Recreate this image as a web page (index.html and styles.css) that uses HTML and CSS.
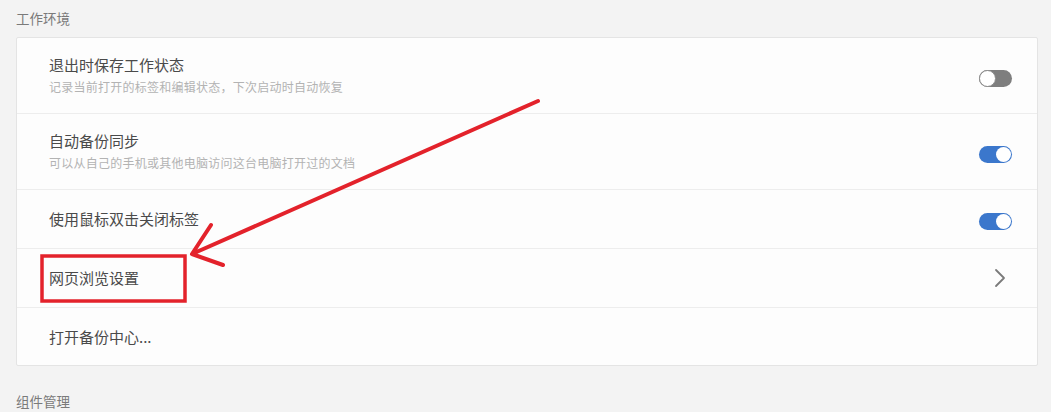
FILE: index.html
```html
<!DOCTYPE html>
<html lang="zh">
<head>
<meta charset="utf-8">
<link rel="stylesheet" href="styles.css">
</head>
<body>
<div class="page">
  <div class="section-title">工作环境</div>
  <div class="card">
    <div class="row tall">
      <div class="text">
        <div class="title">退出时保存工作状态</div>
        <div class="desc">记录当前打开的标签和编辑状态，下次启动时自动恢复</div>
      </div>
      <div class="toggle off"><span class="knob"></span></div>
    </div>
    <div class="row tall">
      <div class="text">
        <div class="title">自动备份同步</div>
        <div class="desc">可以从自己的手机或其他电脑访问这台电脑打开过的文档</div>
      </div>
      <div class="toggle on"><span class="knob"></span></div>
    </div>
    <div class="row">
      <div class="text"><div class="title">使用鼠标双击关闭标签</div></div>
      <div class="toggle on"><span class="knob"></span></div>
    </div>
    <div class="row">
      <div class="text"><div class="title">网页浏览设置</div></div>
      <svg class="chevron" width="12" height="20" viewBox="0 0 12 20"><path d="M2 2 L10 10 L2 18" fill="none" stroke="#7a7a7a" stroke-width="1.8" stroke-linecap="round" stroke-linejoin="round"/></svg>
    </div>
    <div class="row last">
      <div class="text"><div class="title">打开备份中心...</div></div>
    </div>
  </div>
  <div class="section-title second">组件管理</div>
</div>
<svg class="annot" width="1051" height="412" viewBox="0 0 1051 412">
  <rect x="42" y="256" width="143" height="45" fill="none" stroke="#e3222b" stroke-width="3.5"/>
  <path d="M538 101 L192 254 M211 225 L192 254 L223 265" fill="none" stroke="#e3222b" stroke-width="4" stroke-linecap="round" stroke-linejoin="round"/>
</svg>
</body>
</html>
```

FILE: styles.css
```css
html, body {
  margin: 0;
  padding: 0;
  background: #f3f3f3;
  font-family: "Noto Sans CJK SC", "Noto Sans", sans-serif;
}
.page {
  padding: 0 13px 0 16px;
  width: 1051px;
  height: 412px;
  box-sizing: border-box;
  overflow: hidden;
}
.section-title {
  height: 37px;
  line-height: 37px;
  font-size: 13.5px;
  color: #7a7a7a;
}
.section-title.second {
  margin-top: 18px;
  height: 34px;
  line-height: 34px;
}
.card {
  background: #fdfdfd;
  border: 1px solid #e4e4e4;
  border-radius: 2px;
}
.row {
  height: 59px;
  box-sizing: border-box;
  border-bottom: 1px solid #ededed;
  display: flex;
  align-items: center;
  justify-content: space-between;
  padding: 0 25px 0 32px;
}
.row.tall {
  height: 76px;
}
.row.last {
  border-bottom: none;
  height: 57px;
}
.title {
  font-size: 15px;
  color: #4a4a4a;
  line-height: 20px;
}
.desc {
  font-size: 12px;
  letter-spacing: 0.25px;
  color: #b3b3b3;
  line-height: 18px;
  margin-top: 3px;
}
.toggle {
  width: 33px;
  height: 17px;
  border-radius: 9px;
  box-sizing: border-box;
  position: relative;
  margin-top: 6px;
}
.row:not(.tall) .toggle {
  margin-top: 4px;
}
.toggle.off {
  background: #7e7e7e;
}
.toggle.on {
  background: #3b77cc;
}
.knob {
  position: absolute;
  top: 1px;
  width: 15px;
  height: 15px;
  border-radius: 50%;
  background: #fff;
  box-sizing: border-box;
}
.toggle.off .knob {
  left: 0;
  top: 0;
  width: 17px;
  height: 17px;
  border: 1px solid #8a8a8a;
}
.toggle.on .knob {
  right: 1px;
}
.chevron {
  margin-right: 6px;
}
.annot {
  position: absolute;
  left: 0;
  top: 0;
  pointer-events: none;
}
```
